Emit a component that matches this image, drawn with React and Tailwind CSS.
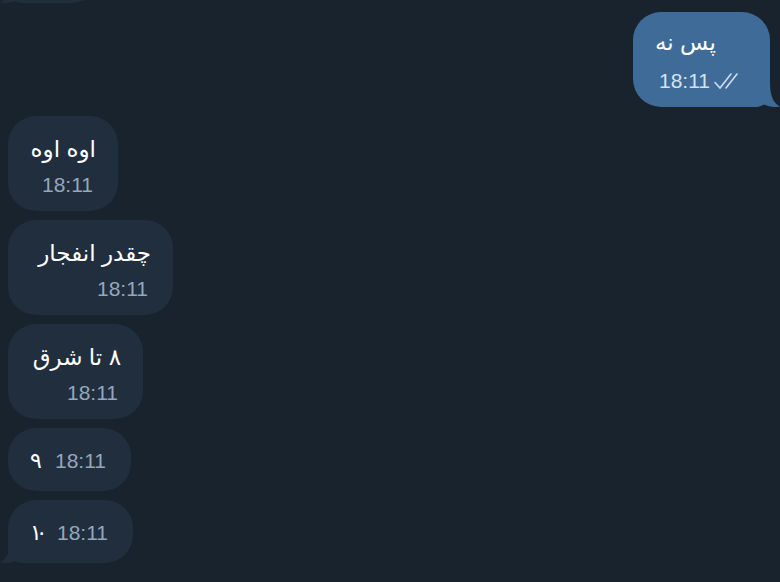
import React from 'react'

const FONT = "font-['Liberation_Sans','DejaVu_Sans',sans-serif]"

const IN_BG = '#212e3e'
const OUT_BG = '#3f6b98'

const TailRight = ({ color }) => (
  <svg className="absolute right-[-10px] bottom-0" width="24" height="24" viewBox="0 0 24 24">
    <path d="M0 0 H14 C14 12 17 20 24 23.6 C17 24.6 10 23 6 20.5 C4 22.5 2 24 0 24 Z" fill={color} />
  </svg>
)

const TailLeft = ({ color }) => (
  <svg className="absolute left-[-8px] bottom-0" width="24" height="24" viewBox="0 0 24 24">
    <path d="M24 0 H10 C10 12 7 20 0 23.6 C7 24.6 14 23 18 20.5 C20 22.5 22 24 24 24 Z" fill={color} />
  </svg>
)

const DoubleCheck = () => (
  <svg width="33" height="18" viewBox="0 0 33 18" fill="none" stroke="#cddcec" strokeWidth="1.6" strokeLinecap="round">
    <path d="M2 10.5 L7 16 L18 2" />
    <path d="M13 16 L24 2" />
  </svg>
)

const Incoming = ({ text, width }) => (
  <div className={`relative ${width} h-[95px] rounded-[28px] bg-[#212e3e] px-[22px] pt-[19px] pb-[13px]`}>
    <div dir="rtl" className="text-right text-[23px] leading-[28px] text-white">{text}</div>
    <div className="mt-[9px] pr-[3px] text-right text-[21px] leading-[26px] text-[#94a7bc]">18:11</div>
  </div>
)

const IncomingShort = ({ children, width, tail }) => (
  <div className={`relative ${width} h-[63px] flex items-center justify-between rounded-[28px] ${tail ? 'rounded-bl-[14px]' : ''} bg-[#212e3e] pl-[22px] pr-[25px] pt-[3px]`}>
    <span className="flex text-[22px] leading-[28px] text-white">{children}</span>
    <span className="text-[21px] leading-[26px] text-[#94a7bc]">18:11</span>
    {tail ? <TailLeft color={IN_BG} /> : null}
  </div>
)

export default function App() {
  return (
    <div className={`w-[780px] h-[582px] overflow-hidden bg-[#19232e] ${FONT} flex flex-col gap-[9px] pl-[8px] pr-[10px]`}>
      {/* previous message, cut off at the top */}
      <div className="relative mt-[-60px] w-[92px] h-[63px] rounded-[28px] rounded-bl-[14px] bg-[#212e3e]">
        <TailLeft color={IN_BG} />
      </div>

      <div className="self-end relative w-[137px] h-[95px] rounded-[28px] rounded-br-[14px] bg-[#3f6b98] px-[22px] pt-[16px] pb-[13px]">
        <div dir="rtl" className="text-left text-[23px] leading-[28px] text-white">پس نه</div>
        <div className="mt-[12px] flex items-center justify-end gap-[3px] pr-[2px] text-[21px] leading-[26px] text-[#d3e2f1]">
          <span>18:11</span>
          <DoubleCheck />
        </div>
        <TailRight color={OUT_BG} />
      </div>

      <Incoming text="اوه اوه" width="w-[110px]" />
      <Incoming text="چقدر انفجار" width="w-[165px]" />
      <Incoming text="۸ تا شرق" width="w-[135px]" />
      <IncomingShort width="w-[123px]">۹</IncomingShort>
      <IncomingShort width="w-[125px]" tail>
        <span>۱</span>
        <span className="ml-[-6px]">۰</span>
      </IncomingShort>
    </div>
  )
}
